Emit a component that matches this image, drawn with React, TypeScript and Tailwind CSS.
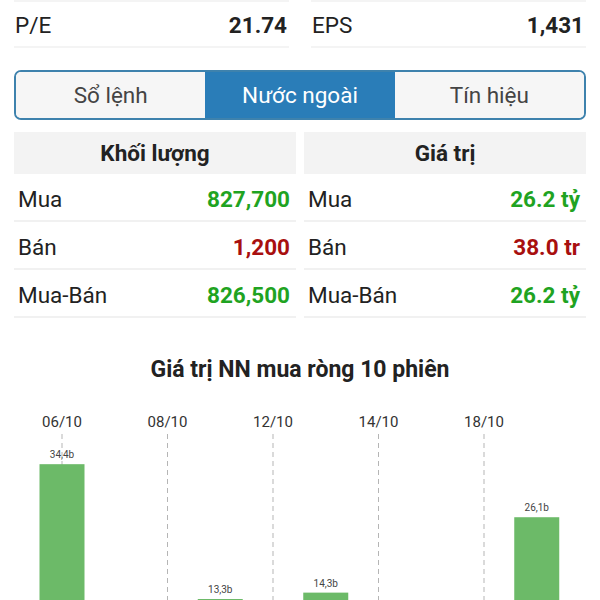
const font = { fontFamily: "Roboto, 'Noto Sans', sans-serif" };

const stats = [
  { label: "P/E", value: "21.74" },
  { label: "EPS", value: "1,431" },
];

const tabs = ["Sổ lệnh", "Nước ngoài", "Tín hiệu"];

type Row = { label: string; value: string; up: boolean };

const volume: Row[] = [
  { label: "Mua", value: "827,700", up: true },
  { label: "Bán", value: "1,200", up: false },
  { label: "Mua-Bán", value: "826,500", up: true },
];

const amount: Row[] = [
  { label: "Mua", value: "26.2 tỷ", up: true },
  { label: "Bán", value: "38.0 tr", up: false },
  { label: "Mua-Bán", value: "26.2 tỷ", up: true },
];

// 10 sessions, only positive ones draw above the cut
const sessions = [34.4, 0, 0, 13.3, 0, 14.3, 0, 0, 0, 26.1];
const dates: Record<number, string> = { 0: "06/10", 2: "08/10", 4: "12/10", 6: "14/10", 8: "18/10" };

function Table({ title, rows }: { title: string; rows: Row[] }) {
  return (
    <div className="flex flex-col">
      <div className="flex h-[42px] items-center justify-center bg-[#f3f3f3] text-[22.5px] leading-[28px] font-bold text-[#222]">
        {title}
      </div>
      {rows.map((r) => (
        <div
          key={r.label}
          className="flex h-[48px] items-center justify-between border-b-2 border-[#f1f1f1] pt-[3px] pl-[4px] pr-[6px] text-[22.5px] leading-[28px]"
        >
          <span className="text-[#222]">{r.label}</span>
          <span className={"font-bold " + (r.up ? "text-[#1fa322]" : "text-[#a80f0f]")}>
            {r.value}
          </span>
        </div>
      ))}
    </div>
  );
}

function Chart() {
  const step = 52.75;
  const x0 = 62;
  const base = 283;
  const scale = 6.39;
  return (
    <svg width="600" height="300" className="block">
      {Object.entries(dates).map(([i, d]) => {
        const x = x0 + Number(i) * step;
        return (
          <g key={i}>
            <line x1={x} x2={x} y1={33} y2={300} stroke="#b5b5b5" strokeWidth="1" strokeDasharray="5 4" />
            <text x={x} y={26} textAnchor="middle" fontSize="15" fill="#333" style={font}>
              {d}
            </text>
          </g>
        );
      })}
      {sessions.map((v, i) => {
        if (v <= 0) return null;
        const x = x0 + i * step;
        const h = v * scale;
        return (
          <g key={i}>
            <rect x={x - 22.5} y={base - h} width="45" height={h} fill="#6cba68" />
            <text x={x} y={base - h - 6} textAnchor="middle" fontSize="10" fill="#444" style={font}>
              {v.toFixed(1).replace(".", ",")}b
            </text>
          </g>
        );
      })}
    </svg>
  );
}

export default function App() {
  return (
    <div className="h-screen overflow-hidden bg-white" style={font}>
      <div className="grid grid-cols-2 gap-[22px] px-[14px]">
        {stats.map((s) => (
          <div
            key={s.label}
            className="flex h-[48px] items-center justify-between border-y-2 border-[#f4f4f4] pt-[2px] pl-[1px] pr-[2px] text-[22.5px] leading-[28px] text-[#222]"
          >
            <span>{s.label}</span>
            <span className="font-bold">{s.value}</span>
          </div>
        ))}
      </div>

      <div className="mx-[14px] mt-[22px] flex h-[50px] overflow-hidden rounded-[7px] border-2 border-[#3e82ad]">
        {tabs.map((t, i) => (
          <div
            key={t}
            className={
              "flex flex-1 items-center justify-center text-[22.5px] leading-[28px] " +
              (i === 1 ? "bg-[#2a7db8] text-white" : "bg-[#f6f6f6] text-[#444]")
            }
          >
            {t}
          </div>
        ))}
      </div>

      <div className="mt-[12px] grid grid-cols-2 gap-[8px] px-[14px]">
        <Table title="Khối lượng" rows={volume} />
        <Table title="Giá trị" rows={amount} />
      </div>

      <div className="mt-[38px] text-center text-[23px] leading-[28px] font-bold text-[#222]">
        Giá trị NN mua ròng 10 phiên
      </div>

      <div className="mt-[17px]">
        <Chart />
      </div>
    </div>
  );
}
